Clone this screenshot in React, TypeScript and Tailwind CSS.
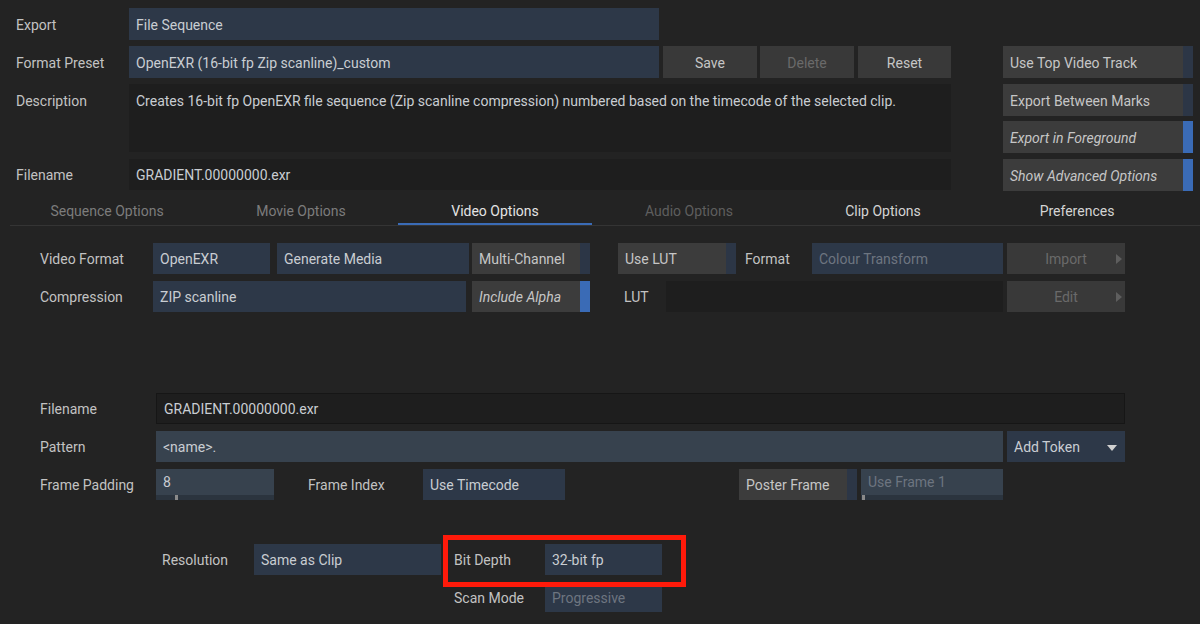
import React from "react";

const FONT = { fontFamily: "Roboto, 'Liberation Sans', sans-serif" };

function Field({
  w,
  text,
  tone = "blue",
  dim = false,
}: {
  w: string;
  text?: string;
  tone?: "blue" | "slate" | "dark";
  dim?: boolean;
}) {
  const bg =
    tone === "blue"
      ? "bg-[#2d3848]"
      : tone === "slate"
        ? "bg-[#37424e]"
        : "bg-[#1e1e1e] border border-[#161616]";
  return (
    <div className={`${w} h-full ${bg} flex items-center px-[7px] pt-[2px] shrink-0`}>
      <span className={dim ? "text-[#6d7580]" : "text-[#c9cdd2]"}>{text}</span>
    </div>
  );
}

function Toggle({
  w,
  text,
  on = false,
  italic = false,
}: {
  w: string;
  text: string;
  on?: boolean;
  italic?: boolean;
}) {
  return (
    <div className={`${w} h-full bg-[#3c3c3c] flex shrink-0`}>
      <div className={`flex-1 flex items-center px-[7px] pt-[2px] text-[#c6c6c6] ${italic ? "italic" : ""}`}>
        {text}
      </div>
      <div className={`w-[10px] h-full ${on ? "bg-[#3a6bb6]" : "bg-[#2c3646]"}`} />
    </div>
  );
}

function Button({
  w,
  text,
  dim = false,
  arrow = false,
}: {
  w: string;
  text: string;
  dim?: boolean;
  arrow?: boolean;
}) {
  return (
    <div
      className={`${w} h-full bg-[#393939] flex items-center justify-center pt-[2px] relative shrink-0 ${
        dim ? "text-[#6a6a6a]" : "text-[#c6c6c6]"
      }`}
    >
      {text}
      {arrow && (
        <svg className="absolute right-[3px] top-1/2 -translate-y-1/2" width="6" height="10" viewBox="0 0 6 10">
          <path d="M0 0 L6 5 L0 10 Z" fill="#5e5e5e" />
        </svg>
      )}
    </div>
  );
}

function SliderField({ w, text, dim = false, handle }: { w: string; text: string; dim?: boolean; handle: string }) {
  return (
    <div className={`${w} h-full bg-[#37424e] flex flex-col shrink-0`}>
      <div className={`flex-1 px-[7px] pt-[3px] ${dim ? "text-[#6d7580]" : "text-[#c9cdd2]"}`}>{text}</div>
      <div className="h-[5px] bg-[#2b343e] flex">
        <div className={handle} />
        <div className="w-[3px] h-full bg-[#8a8a8a]" />
      </div>
    </div>
  );
}

const Label = ({ w, text, cls = "" }: { w: string; text: string; cls?: string }) => (
  <div className={`${w} shrink-0 flex items-center h-full pt-[2px] text-[#c2c2c2] ${cls}`}>{text}</div>
);

export default function App() {
  const tabs = [
    { t: "Sequence Options", c: "text-[#7c7c7c]" },
    { t: "Movie Options", c: "text-[#7c7c7c]" },
    { t: "Video Options", c: "text-[#e4e4e4]", active: true },
    { t: "Audio Options", c: "text-[#5e5e5e]" },
    { t: "Clip Options", c: "text-[#d4d4d4]" },
    { t: "Preferences", c: "text-[#d4d4d4]" },
  ];

  return (
    <div className="w-[1200px] h-[624px] bg-[#232323] text-[14px] overflow-hidden" style={FONT}>
      {/* Top section */}
      <div className="flex">
        <div className="w-[951px] flex flex-col">
          <div className="flex h-[32px] mt-[8px]">
            <Label w="w-[129px]" cls="pl-4" text="Export" />
            <Field w="w-[530px]" text="File Sequence" />
          </div>
          <div className="flex h-[32px] mt-[6px]">
            <Label w="w-[129px]" cls="pl-4" text="Format Preset" />
            <Field w="w-[530px]" text="OpenEXR (16-bit fp Zip scanline)_custom" />
            <div className="ml-[4px] h-full flex">
              <Button w="w-[94px]" text="Save" />
            </div>
            <div className="ml-[3px] h-full flex">
              <Button w="w-[94px]" text="Delete" dim />
            </div>
            <div className="ml-[4px] h-full flex">
              <Button w="w-[93px]" text="Reset" />
            </div>
          </div>
          <div className="flex h-[68px] mt-[6px]">
            <div className="w-[129px] pl-4 pt-[2px] h-[32px] flex items-center text-[#c2c2c2]">Description</div>
            <div className="w-[822px] h-full bg-[#1e1e1e] px-[7px]">
              <div className="h-[32px] pt-[2px] flex items-center text-[#c9cdd2]">
                Creates 16-bit fp OpenEXR file sequence (Zip scanline compression) numbered based on the timecode of the
                selected clip.
              </div>
            </div>
          </div>
          <div className="flex h-[31px] mt-[7px]">
            <Label w="w-[129px]" cls="pl-4" text="Filename" />
            <div className="w-[822px] h-full bg-[#1e1e1e] flex items-center px-[7px] pt-[2px] text-[#c9cdd2]">
              GRADIENT.00000000.exr
            </div>
          </div>
        </div>
        <div className="ml-[52px] mt-[46px] w-[190px] flex flex-col">
          <div className="h-[32px]">
            <Toggle w="w-[190px]" text="Use Top Video Track" />
          </div>
          <div className="h-[32px] mt-[6px]">
            <Toggle w="w-[190px]" text="Export Between Marks" />
          </div>
          <div className="h-[32px] mt-[5px]">
            <Toggle w="w-[190px]" text="Export in Foreground" on italic />
          </div>
          <div className="h-[32px] mt-[6px]">
            <Toggle w="w-[190px]" text="Show Advanced Options" on italic />
          </div>
        </div>
      </div>

      {/* Tabs */}
      <div className="ml-[10px] mt-[5px] h-[30px] flex border-b border-[#343434]">
        {tabs.map((tab) => (
          <div
            key={tab.t}
            className={`w-[194px] h-full flex items-center justify-center pt-[2px] ${tab.c} ${
              tab.active ? "border-b-2 border-[#3a6bb6] mb-[-1px] pt-[4px]" : ""
            }`}
          >
            {tab.t}
          </div>
        ))}
      </div>

      {/* Video options */}
      <div className="pl-[40px] mt-[17px]">
        <div className="flex h-[31px]">
          <Label w="w-[113px]" text="Video Format" />
          <Field w="w-[117px]" text="OpenEXR" />
          <div className="ml-[7px] h-full flex">
            <Field w="w-[192px]" text="Generate Media" />
          </div>
          <div className="ml-[3px] h-full flex">
            <Toggle w="w-[118px]" text="Multi-Channel" />
          </div>
          <div className="ml-[28px] h-full flex">
            <Toggle w="w-[118px]" text="Use LUT" />
          </div>
          <Label w="w-[76px]" cls="pl-[9px]" text="Format" />
          <Field w="w-[191px]" text="Colour Transform" dim />
          <div className="ml-[4px] h-full flex">
            <Button w="w-[118px]" text="Import" dim arrow />
          </div>
        </div>
        <div className="flex h-[31px] mt-[7px]">
          <Label w="w-[113px]" text="Compression" />
          <Field w="w-[313px]" text="ZIP scanline" />
          <div className="ml-[6px] h-full flex">
            <Toggle w="w-[118px]" text="Include Alpha" on italic />
          </div>
          <Label w="w-[76px]" cls="pl-[34px]" text="LUT" />
          <div className="w-[337px] h-full bg-[#1e1e1e] shrink-0" />
          <div className="ml-[4px] h-full flex">
            <Button w="w-[118px]" text="Edit" dim arrow />
          </div>
        </div>

        <div className="flex h-[31px] mt-[81px]">
          <Label w="w-[116px]" text="Filename" />
          <Field w="w-[969px]" tone="dark" text="GRADIENT.00000000.exr" />
        </div>
        <div className="flex h-[31px] mt-[7px]">
          <Label w="w-[116px]" text="Pattern" />
          <Field w="w-[847px]" tone="slate" text="<name>." />
          <div className="ml-[4px] w-[118px] h-full bg-[#2d3848] flex items-center justify-between px-[7px] pt-[2px] text-[#c9cdd2]">
            Add Token
            <svg width="10" height="6" viewBox="0 0 10 6" className="mr-[1px]">
              <path d="M0 0 L10 0 L5 6 Z" fill="#d0d0d0" />
            </svg>
          </div>
        </div>
        <div className="flex h-[31px] mt-[7px]">
          <Label w="w-[116px]" text="Frame Padding" />
          <SliderField w="w-[118px]" text="8" handle="w-[19px]" />
          <Label w="w-[149px]" cls="pl-[34px]" text="Frame Index" />
          <Field w="w-[142px]" text="Use Timecode" />
          <div className="ml-[174px] h-full flex">
            <Toggle w="w-[118px]" text="Poster Frame" />
          </div>
          <div className="ml-[4px] h-full flex">
            <SliderField w="w-[142px]" text="Use Frame 1" dim handle="w-[1px]" />
          </div>
        </div>
      </div>

      {/* Resolution / bit depth */}
      <div className="pl-[162px] mt-[44px]">
        <div className="flex h-[31px]">
          <Label w="w-[92px]" text="Resolution" />
          <Field w="w-[187px]" text="Same as Clip" />
          <div className="relative flex h-full ml-[13px]">
            <Label w="w-[91px]" text="Bit Depth" />
            <Field w="w-[117px]" text="32-bit fp" />
            <div className="absolute left-[-11px] top-[-9px] w-[243px] h-[52px] border-[5px] border-[#ff1a0a]" />
          </div>
        </div>
        <div className="flex h-[30px] mt-[7px] ml-[292px]">
          <Label w="w-[91px]" text="Scan Mode" />
          <Field w="w-[117px]" text="Progressive" dim />
        </div>
      </div>
    </div>
  );
}
